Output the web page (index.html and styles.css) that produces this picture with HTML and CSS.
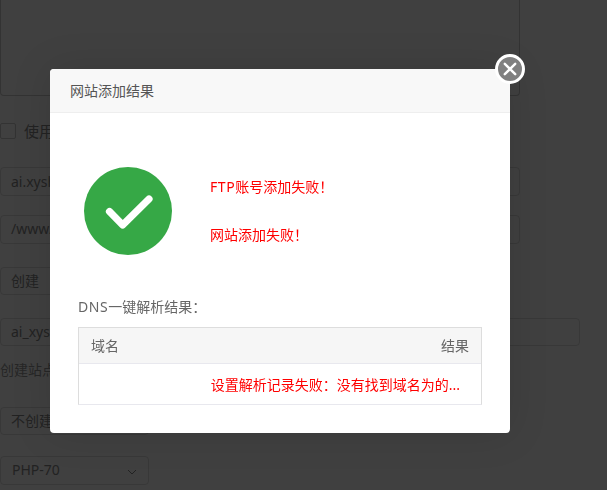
FILE: index.html
```html
<!DOCTYPE html>
<html lang="zh-CN">
<head>
<meta charset="utf-8">
<title>网站添加结果</title>
<link rel="stylesheet" href="styles.css">
</head>
<body>
<form class="form">
  <div class="textarea"></div>
  <label class="check"><span class="box"></span><span>使用FTP</span></label>
  <div class="field wide first">ai.xyshop.com</div>
  <div class="field wide path">/www/wwwroot/ai.xyshop.com</div>
  <div class="field short create">创建</div>
  <div class="field full">ai_xyshop</div>
  <div class="hint">创建站点同时创建数据库</div>
  <div class="field short nodb">不创建</div>
  <div class="field short php">PHP-70
    <svg class="chev" width="10" height="6" viewBox="0 0 10 6"><path d="M1 1l4 4 4-4" fill="none" stroke="currentColor" stroke-width="1"/></svg>
  </div>
</form>
<div class="overlay"></div>
<section class="modal">
  <header class="modal-head">网站添加结果</header>
  <button class="close" type="button" aria-label="关闭">
    <svg width="30" height="30" viewBox="0 0 30 30"><circle cx="15" cy="15" r="13.5" fill="#808080" stroke="#fff" stroke-width="3"/><path d="M9.8 9.8l10.4 10.4M20.2 9.8L9.8 20.2" stroke="#fff" stroke-width="2.4" stroke-linecap="round"/></svg>
  </button>
  <div class="modal-body">
    <div class="result">
      <svg class="ok" width="88" height="88" viewBox="0 0 88 88"><circle cx="44" cy="44" r="44" fill="#36a846"/><path d="M25.5 44.5L38.7 58 65 32" fill="none" stroke="#fff" stroke-width="7.2" stroke-linecap="round" stroke-linejoin="round"/></svg>
      <div class="messages">
        <p><span class="latin">FTP</span>账号添加失败！</p>
        <p>网站添加失败！</p>
      </div>
    </div>
    <h3 class="dns-title"><span class="latin">DNS</span>一键解析结果：</h3>
    <div class="table">
      <div class="thead"><span>域名</span><span>结果</span></div>
      <div class="trow"><span>设置解析记录失败：没有找到域名为的...</span></div>
    </div>
  </div>
</section>
</body>
</html>
```
FILE: styles.css
```css
* { box-sizing: border-box; }
html, body { margin: 0; height: 100%; overflow: hidden; }
body {
  background: #fff;
  color: #888;
  font: 14px/20px "Noto Sans", "Noto Sans CJK SC", sans-serif;
}
.form { display: flex; flex-direction: column; align-items: flex-start; }
.textarea {
  width: 520px; height: 96px;
  border: 1px solid #ccc; border-top: 0;
  border-radius: 0 0 4px 4px;
}
.check { display: flex; align-items: center; gap: 8px; margin-top: 27px; height: 16px; font-size: 15px; }
.box { width: 16px; height: 16px; border: 1px solid #ccc; border-radius: 2px; }
.field {
  height: 29px; padding: 0 10px;
  border: 1px solid #ddd; border-radius: 4px;
  line-height: 25px; white-space: nowrap; overflow: hidden;
  font-size: 14px;
  position: relative;
}
.first { line-height: 27px; }
.wide { width: 520px; margin-top: 28px; }
.path { margin-top: 19px; }
.short { width: 149px; }
.create { margin-top: 23px; height: 28px; }
.full { width: 580px; margin-top: 23px; height: 28px; }
.hint { margin-top: 14px; height: 20px; margin-bottom: -1px; line-height: 20px; font-size: 14px; color: #999; white-space: nowrap; }
.nodb { margin-top: 28px; height: 28px; }
.php { margin-top: 21px; padding-left: 11px; }
.chev { position: absolute; right: 11px; top: 12px; color: #888; }

.overlay { position: fixed; inset: 0; background: rgba(0, 0, 0, .75); }
.modal {
  position: absolute; left: 50px; top: 69px;
  width: 460px; height: 364px;
  background: #fff; border-radius: 4px;
  box-shadow: 0 0 40px rgba(0, 0, 0, .12);
  color: #555;
}
.modal-head {
  height: 44px; padding: 0 20px;
  background: #f8f8f8; border-bottom: 1px solid #eee;
  border-radius: 4px 4px 0 0;
  line-height: 43px; font-size: 14px;
}
.close {
  position: absolute; right: -15px; top: -15px;
  width: 30px; height: 30px; padding: 0;
  background: none; border: 0; display: block;
}
.close svg { display: block; }
.modal-body { padding: 54px 28px 0; }
.result { display: flex; align-items: center; padding-left: 6px; }
.ok { flex: none; }
.messages { margin-left: 38px; color: #f00; display: flex; flex-direction: column; gap: 28px; }
.messages p { margin: 0; line-height: 20px; }
.latin { letter-spacing: .6px; }
.dns-title { margin: 42px 0 0; font-size: 14px; font-weight: 400; line-height: 20px; color: #666; }
.table {
  margin-top: 10px; width: 404px; height: 78px;
  border: 1px solid #ddd; border-bottom-color: #e8e8ee;
}
.thead {
  display: flex; justify-content: space-between;
  height: 36px; padding: 0 12px;
  background: #f6f6f6; border-bottom: 1px solid #e8e8ee;
  line-height: 35px; color: #666;
}
.trow {
  display: flex; justify-content: flex-end;
  height: 40px; padding-right: 21px;
  line-height: 42px; color: #f00;
}
```
